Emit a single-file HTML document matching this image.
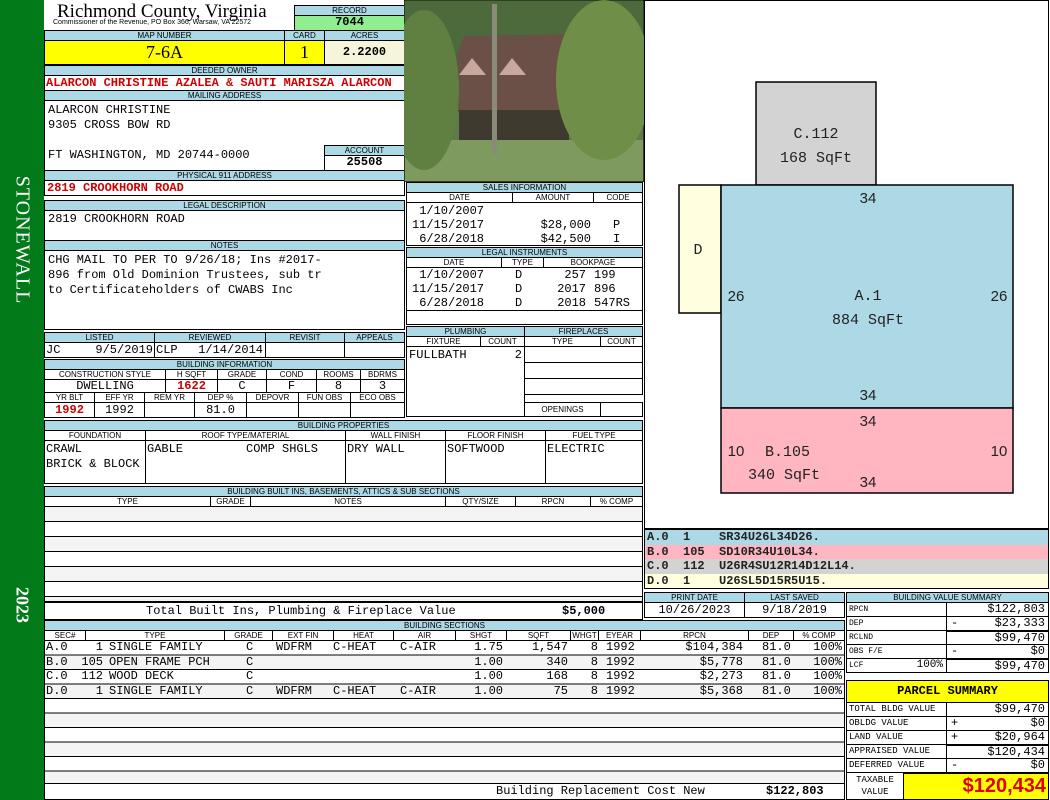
<!DOCTYPE html>
<html><head><meta charset="utf-8"><style>
*{margin:0;padding:0;box-sizing:border-box}
body{width:1050px;height:800px;position:relative;background:#fff;overflow:hidden;font-family:"Liberation Sans",sans-serif}
.a{position:absolute;border:1px solid #000;background:#fff;overflow:hidden;white-space:nowrap}
.h{background:#add8e6;font-size:8px;text-align:center;line-height:9px;font-family:"Liberation Sans",sans-serif}
.m{font-family:"Liberation Mono",monospace;font-size:12px;line-height:13px}
.r{color:#d00000;font-weight:bold}
.c{text-align:center}.rt{text-align:right;padding-right:3px}
.t{position:absolute;white-space:nowrap}
.row{position:absolute;left:0;height:15px;width:100%;font-family:"Liberation Mono",monospace;font-size:12px;line-height:14px}
.row span{position:absolute;white-space:nowrap}
</style></head><body>
<div style="position:absolute;left:0;top:0;width:44px;height:800px;background:#037a1a"></div>
<div class="t" style="left:22px;top:240px;transform:translate(-50%,-50%) rotate(90deg);color:#fff;font:20px 'Liberation Serif',serif;letter-spacing:1px">STONEWALL</div>
<div class="t" style="left:22px;top:605px;transform:translate(-50%,-50%) rotate(90deg);color:#fff;font:bold 18px 'Liberation Serif',serif">2023</div>

<div class="t" style="left:57px;top:1px;font:19px 'Liberation Serif',serif">Richmond County, Virginia</div>
<div class="t" style="left:53px;top:19px;font:7px 'Liberation Sans',sans-serif">Commissioner of the Revenue, PO Box 366, Warsaw, VA 22572</div>
<div class="a h" style="left:294px;top:5px;width:111px;height:11px">RECORD</div>
<div class="a m c" style="left:294px;top:15px;width:111px;height:16px;background:#90ee90;font-weight:bold">7044</div>
<div class="a h" style="left:44px;top:30px;width:241px;height:11px">MAP NUMBER</div>
<div class="a h" style="left:284px;top:30px;width:41px;height:11px">CARD</div>
<div class="a h" style="left:324px;top:30px;width:81px;height:11px">ACRES</div>
<div class="a c" style="left:44px;top:40px;width:241px;height:25px;background:#ffff00;font:18px 'Liberation Serif',serif;line-height:23px">7-6A</div>
<div class="a c" style="left:284px;top:40px;width:41px;height:25px;background:#ffff00;font:18px 'Liberation Serif',serif;line-height:23px">1</div>
<div class="a m c" style="left:324px;top:40px;width:81px;height:25px;background:#f5f5dc;font-weight:bold;line-height:23px">2.2200</div>
<div class="a h" style="left:44px;top:65px;width:361px;height:11px">DEEDED OWNER</div>
<div class="a m r" style="left:44px;top:75px;width:361px;height:16px;padding-left:1px;font-size:12px;line-height:15px">ALARCON CHRISTINE AZALEA &amp; SAUTI MARISZA ALARCON</div>
<div class="a h" style="left:44px;top:90px;width:361px;height:11px">MAILING ADDRESS</div>
<div class="a m" style="left:44px;top:100px;width:361px;height:71px;padding:2px 3px;line-height:15px">ALARCON CHRISTINE<br>9305 CROSS BOW RD<br><br>FT WASHINGTON, MD 20744-0000</div>
<div class="a h" style="left:324px;top:145px;width:81px;height:11px">ACCOUNT</div>
<div class="a m c" style="left:324px;top:155px;width:81px;height:16px;font-weight:bold">25508</div>
<div class="a h" style="left:44px;top:170px;width:361px;height:11px">PHYSICAL 911 ADDRESS</div>
<div class="a m r" style="left:44px;top:180px;width:361px;height:16px;padding-left:2px;line-height:15px">2819 CROOKHORN ROAD</div>
<div class="a h" style="left:44px;top:200px;width:361px;height:11px">LEGAL DESCRIPTION</div>
<div class="a m" style="left:44px;top:210px;width:361px;height:31px;padding:2px 3px">2819 CROOKHORN ROAD</div>
<div class="a h" style="left:44px;top:240px;width:361px;height:11px">NOTES</div>
<div class="a m" style="left:44px;top:250px;width:361px;height:80px;padding:2px 3px;line-height:15px">CHG MAIL TO PER TO 9/26/18; Ins #2017-<br>896 from Old Dominion Trustees, sub tr<br>to Certificateholders of CWABS Inc</div>

<div class="a h" style="left:44px;top:332px;width:111px;height:11px">LISTED</div>
<div class="a h" style="left:154px;top:332px;width:112px;height:11px">REVIEWED</div>
<div class="a h" style="left:265px;top:332px;width:80px;height:11px">REVISIT</div>
<div class="a h" style="left:344px;top:332px;width:61px;height:11px">APPEALS</div>
<div class="a m" style="left:44px;top:342px;width:111px;height:16px;padding:1px 1px">JC<span style="float:right">9/5/2019</span></div>
<div class="a m" style="left:154px;top:342px;width:112px;height:16px;padding:1px 1px">CLP<span style="float:right;padding-right:1px">1/14/2014</span></div>
<div class="a" style="left:265px;top:342px;width:80px;height:16px"></div>
<div class="a" style="left:344px;top:342px;width:61px;height:16px"></div>

<div class="a h" style="left:44px;top:359px;width:361px;height:11px">BUILDING INFORMATION</div>
<div class="a h" style="left:44px;top:369px;width:122px;height:11px;background:#fff">CONSTRUCTION STYLE</div>
<div class="a h" style="left:165px;top:369px;width:53px;height:11px;background:#fff">H SQFT</div>
<div class="a h" style="left:217px;top:369px;width:50px;height:11px;background:#fff">GRADE</div>
<div class="a h" style="left:266px;top:369px;width:51px;height:11px;background:#fff">COND</div>
<div class="a h" style="left:316px;top:369px;width:45px;height:11px;background:#fff">ROOMS</div>
<div class="a h" style="left:360px;top:369px;width:45px;height:11px;background:#fff">BDRMS</div>
<div class="a m c" style="left:44px;top:379px;width:122px;height:14px">DWELLING</div>
<div class="a m c r" style="left:165px;top:379px;width:53px;height:14px">1622</div>
<div class="a m c" style="left:217px;top:379px;width:50px;height:14px">C</div>
<div class="a m c" style="left:266px;top:379px;width:51px;height:14px">F</div>
<div class="a m c" style="left:316px;top:379px;width:45px;height:14px">8</div>
<div class="a m c" style="left:360px;top:379px;width:45px;height:14px">3</div>
<div class="a h" style="left:44px;top:392px;width:51px;height:11px;background:#fff">YR BLT</div>
<div class="a h" style="left:94px;top:392px;width:51px;height:11px;background:#fff">EFF YR</div>
<div class="a h" style="left:144px;top:392px;width:51px;height:11px;background:#fff">REM YR</div>
<div class="a h" style="left:194px;top:392px;width:53px;height:11px;background:#fff">DEP %</div>
<div class="a h" style="left:246px;top:392px;width:53px;height:11px;background:#fff">DEPOVR</div>
<div class="a h" style="left:298px;top:392px;width:53px;height:11px;background:#fff">FUN OBS</div>
<div class="a h" style="left:350px;top:392px;width:55px;height:11px;background:#fff">ECO OBS</div>
<div class="a m c r" style="left:44px;top:402px;width:51px;height:16px;line-height:15px">1992</div>
<div class="a m c" style="left:94px;top:402px;width:51px;height:16px;line-height:15px">1992</div>
<div class="a" style="left:144px;top:402px;width:51px;height:16px"></div>
<div class="a m c" style="left:194px;top:402px;width:53px;height:16px;line-height:15px">81.0</div>
<div class="a" style="left:246px;top:402px;width:53px;height:16px"></div>
<div class="a" style="left:298px;top:402px;width:53px;height:16px"></div>
<div class="a" style="left:350px;top:402px;width:55px;height:16px"></div>

<svg style="position:absolute;left:404px;top:0" width="240" height="182">
<rect x="0" y="0" width="240" height="182" fill="#5e7a4a" stroke="#000"/>
<rect x="1" y="1" width="238" height="60" fill="#4d6a3c"/>
<rect x="1" y="140" width="238" height="41" fill="#7f9a5e"/>
<polygon points="45,78 60,36 170,34 175,110 40,112" fill="#6b5048"/>
<rect x="55" y="110" width="110" height="30" fill="#3e3a30"/>
<rect x="88" y="4" width="5" height="150" fill="#8a8a78"/>
<ellipse cx="200" cy="80" rx="48" ry="80" fill="#6f8f48"/>
<ellipse cx="20" cy="90" rx="35" ry="80" fill="#5f8040"/>
<polygon points="55,75 68,58 82,75" fill="#c9a8a0"/><polygon points="95,75 108,58 122,75" fill="#c9a8a0"/>
</svg>

<div class="a h" style="left:406px;top:182px;width:237px;height:11px">SALES INFORMATION</div>
<div class="a h" style="left:406px;top:192px;width:107px;height:11px;background:#fff">DATE</div>
<div class="a h" style="left:512px;top:192px;width:82px;height:11px;background:#fff">AMOUNT</div>
<div class="a h" style="left:593px;top:192px;width:50px;height:11px;background:#fff">CODE</div>
<div class="a" style="left:406px;top:202px;width:237px;height:44px">
<div class="row" style="top:1px"><span style="right:158px">1/10/2007</span></div>
<div class="row" style="top:15px"><span style="right:158px">11/15/2017</span><span style="right:51px">$28,000</span><span style="left:206px">P</span></div>
<div class="row" style="top:29px"><span style="right:158px">6/28/2018</span><span style="right:51px">$42,500</span><span style="left:206px">I</span></div>
</div>
<div class="a h" style="left:406px;top:247px;width:237px;height:11px">LEGAL INSTRUMENTS</div>
<div class="a h" style="left:406px;top:257px;width:96px;height:11px;background:#fff">DATE</div>
<div class="a h" style="left:501px;top:257px;width:43px;height:11px;background:#fff">TYPE</div>
<div class="a h" style="left:543px;top:257px;width:100px;height:11px;background:#fff">BOOKPAGE</div>
<div class="a" style="left:406px;top:267px;width:237px;height:58px">
<div class="row" style="top:0"><span style="right:158px">1/10/2007</span><span style="left:108px">D</span><span style="right:56px">257</span><span style="left:187px">199</span></div>
<div class="row" style="top:14px"><span style="right:158px">11/15/2017</span><span style="left:108px">D</span><span style="right:56px">2017</span><span style="left:187px">896</span></div>
<div class="row" style="top:28px"><span style="right:158px">6/28/2018</span><span style="left:108px">D</span><span style="right:56px">2018</span><span style="left:187px">547RS</span></div>
<div style="position:absolute;left:0;top:42px;width:100%;border-top:1px solid #000"></div>
</div>

<div class="a h" style="left:406px;top:326px;width:119px;height:11px">PLUMBING</div>
<div class="a h" style="left:524px;top:326px;width:119px;height:11px">FIREPLACES</div>
<div class="a h" style="left:406px;top:336px;width:75px;height:11px;background:#fff">FIXTURE</div>
<div class="a h" style="left:480px;top:336px;width:45px;height:11px;background:#fff">COUNT</div>
<div class="a h" style="left:524px;top:336px;width:77px;height:11px;background:#fff">TYPE</div>
<div class="a h" style="left:600px;top:336px;width:43px;height:11px;background:#fff">COUNT</div>
<div class="a m" style="left:406px;top:346px;width:119px;height:71px;padding:2px 2px">FULLBATH<span style="float:right">2</span></div>
<div class="a" style="left:524px;top:346px;width:119px;height:17px"></div>
<div class="a" style="left:524px;top:362px;width:119px;height:17px"></div>
<div class="a" style="left:524px;top:378px;width:119px;height:17px"></div>
<div class="a h" style="left:524px;top:402px;width:77px;height:15px;background:#fff;line-height:13px">OPENINGS</div>
<div class="a" style="left:600px;top:402px;width:43px;height:15px"></div>

<div class="a h" style="left:44px;top:420px;width:599px;height:11px">BUILDING PROPERTIES</div>
<div class="a h" style="left:44px;top:430px;width:102px;height:11px;background:#fff">FOUNDATION</div>
<div class="a h" style="left:145px;top:430px;width:201px;height:11px;background:#fff">ROOF TYPE/MATERIAL</div>
<div class="a h" style="left:345px;top:430px;width:101px;height:11px;background:#fff">WALL FINISH</div>
<div class="a h" style="left:445px;top:430px;width:101px;height:11px;background:#fff">FLOOR FINISH</div>
<div class="a h" style="left:545px;top:430px;width:98px;height:11px;background:#fff">FUEL TYPE</div>
<div class="a m" style="left:44px;top:440px;width:102px;height:44px;padding:1px 1px;line-height:15px">CRAWL<br>BRICK &amp; BLOCK</div>
<div class="a m" style="left:145px;top:440px;width:201px;height:44px;padding:1px 1px;line-height:15px">GABLE<span style="position:absolute;left:100px">COMP SHGLS</span></div>
<div class="a m" style="left:345px;top:440px;width:101px;height:44px;padding:1px 1px;line-height:15px">DRY WALL</div>
<div class="a m" style="left:445px;top:440px;width:101px;height:44px;padding:1px 1px;line-height:15px">SOFTWOOD</div>
<div class="a m" style="left:545px;top:440px;width:98px;height:44px;padding:1px 1px;line-height:15px">ELECTRIC</div>

<div class="a h" style="left:44px;top:486px;width:599px;height:11px">BUILDING BUILT INS, BASEMENTS, ATTICS &amp; SUB SECTIONS</div>
<div class="a h" style="left:44px;top:496px;width:167px;height:11px;background:#fff">TYPE</div>
<div class="a h" style="left:210px;top:496px;width:41px;height:11px;background:#fff">GRADE</div>
<div class="a h" style="left:250px;top:496px;width:196px;height:11px;background:#fff">NOTES</div>
<div class="a h" style="left:445px;top:496px;width:71px;height:11px;background:#fff">QTY/SIZE</div>
<div class="a h" style="left:515px;top:496px;width:76px;height:11px;background:#fff">RPCN</div>
<div class="a h" style="left:590px;top:496px;width:53px;height:11px;background:#fff">% COMP</div>
<div class="a" style="left:44px;top:506px;width:599px;height:96px;background:repeating-linear-gradient(#f4f4f4 0 14px,#000 14px 15px,#fff 15px 29px,#000 29px 30px)"></div>
<div class="a m" style="left:44px;top:602px;width:599px;height:18px;line-height:16px"><span class="t" style="left:101px">Total Built Ins, Plumbing &amp; Fireplace Value</span><span class="t" style="left:517px;font-weight:bold">$5,000</span></div>

<div class="a h" style="left:44px;top:620px;width:801px;height:11px">BUILDING SECTIONS</div>
<div style="position:absolute;left:44px;top:630px;width:801px;height:11px">
<div class="a h" style="left:0;top:0;width:42px;height:11px;background:#fff">SEC#</div>
<div class="a h" style="left:41px;top:0;width:140px;height:11px;background:#fff">TYPE</div>
<div class="a h" style="left:180px;top:0;width:49px;height:11px;background:#fff">GRADE</div>
<div class="a h" style="left:228px;top:0;width:62px;height:11px;background:#fff">EXT FIN</div>
<div class="a h" style="left:289px;top:0;width:61px;height:11px;background:#fff">HEAT</div>
<div class="a h" style="left:349px;top:0;width:63px;height:11px;background:#fff">AIR</div>
<div class="a h" style="left:411px;top:0;width:52px;height:11px;background:#fff">SHGT</div>
<div class="a h" style="left:462px;top:0;width:65px;height:11px;background:#fff">SQFT</div>
<div class="a h" style="left:526px;top:0;width:29px;height:11px;background:#fff">WHGT</div>
<div class="a h" style="left:554px;top:0;width:43px;height:11px;background:#fff">EYEAR</div>
<div class="a h" style="left:596px;top:0;width:109px;height:11px;background:#fff">RPCN</div>
<div class="a h" style="left:704px;top:0;width:46px;height:11px;background:#fff">DEP</div>
<div class="a h" style="left:749px;top:0;width:52px;height:11px;background:#fff">% COMP</div>
</div>
<div class="a" style="left:44px;top:640px;width:801px;height:144px;background:repeating-linear-gradient(#fff 0 13.5px,#000 13.5px 14.5px,#f4f4f4 14.5px 28px,#000 28px 29px)"></div>
<div style="position:absolute;left:0;top:640px;width:1050px;height:60px">
<div class="row" style="top:0"><span style="left:46px">A.0</span><span style="right:947px">1</span><span style="left:109px">SINGLE FAMILY</span><span style="left:246px">C</span><span style="left:276px">WDFRM</span><span style="left:333px">C-HEAT</span><span style="left:400px">C-AIR</span><span style="right:547px">1.75</span><span style="right:482px">1,547</span><span style="right:452px">8</span><span style="left:606px">1992</span><span style="right:307px">$104,384</span><span style="left:762px">81.0</span><span style="right:208px">100%</span></div>
<div class="row" style="top:14.5px"><span style="left:46px">B.0</span><span style="right:947px">105</span><span style="left:109px">OPEN FRAME PCH</span><span style="left:246px">C</span><span style="right:547px">1.00</span><span style="right:482px">340</span><span style="right:452px">8</span><span style="left:606px">1992</span><span style="right:307px">$5,778</span><span style="left:762px">81.0</span><span style="right:208px">100%</span></div>
<div class="row" style="top:29px"><span style="left:46px">C.0</span><span style="right:947px">112</span><span style="left:109px">WOOD DECK</span><span style="left:246px">C</span><span style="right:547px">1.00</span><span style="right:482px">168</span><span style="right:452px">8</span><span style="left:606px">1992</span><span style="right:307px">$2,273</span><span style="left:762px">81.0</span><span style="right:208px">100%</span></div>
<div class="row" style="top:43.5px"><span style="left:46px">D.0</span><span style="right:947px">1</span><span style="left:109px">SINGLE FAMILY</span><span style="left:246px">C</span><span style="left:276px">WDFRM</span><span style="left:333px">C-HEAT</span><span style="left:400px">C-AIR</span><span style="right:547px">1.00</span><span style="right:482px">75</span><span style="right:452px">8</span><span style="left:606px">1992</span><span style="right:307px">$5,368</span><span style="left:762px">81.0</span><span style="right:208px">100%</span></div>
</div>
<div class="a m" style="left:44px;top:783px;width:801px;height:17px;line-height:15px"><span class="t" style="left:451px">Building Replacement Cost New</span><span class="t" style="left:721px;font-weight:bold">$122,803</span></div>

<div class="a" style="left:644px;top:0;width:405px;height:529px"></div>
<svg style="position:absolute;left:644px;top:0" width="405" height="529" font-family="Liberation Mono,monospace">
<rect x="112" y="82" width="120" height="103" fill="#d3d3d3" stroke="#000" stroke-width="1.5"/>
<rect x="35" y="185" width="42" height="128" fill="#ffffe0" stroke="#000" stroke-width="1.5"/>
<rect x="77" y="185" width="292" height="223" fill="#add8e6" stroke="#000" stroke-width="1.5"/>
<rect x="77" y="408" width="292" height="85" fill="#ffb6c1" stroke="#000" stroke-width="1.5"/>
<g font-size="15" text-anchor="middle" fill="#222">
<text x="172" y="138">C.112</text><text x="172" y="162">168 SqFt</text>
<text x="54" y="254">D</text>
<text x="224" y="300">A.1</text><text x="224" y="324">884 SqFt</text>
</g>
<g font-size="15" text-anchor="middle" fill="#222" font-family="Liberation Sans,sans-serif">
<text x="224" y="203">34</text><text x="224" y="400">34</text><text x="224" y="426">34</text><text x="224" y="487">34</text>
<text x="92" y="301">26</text><text x="355" y="301">26</text>
<text x="92" y="456">10</text><text x="355" y="456">10</text>
</g>
<g font-size="15" fill="#222"><text x="121" y="456">B.105</text><text x="104" y="479">340 SqFt</text></g>
</svg>

<div class="a m" style="left:644px;top:529px;width:405px;height:60px;font-weight:bold;font-size:12px;line-height:14.5px;color:#222">
<div style="background:#add8e6;height:14.5px;padding-left:2px">A.0&nbsp;&nbsp;1&nbsp;&nbsp;&nbsp;&nbsp;SR34U26L34D26.</div>
<div style="background:#ffb6c1;height:14.5px;padding-left:2px">B.0&nbsp;&nbsp;105&nbsp;&nbsp;SD10R34U10L34.</div>
<div style="background:#d3d3d3;height:14.5px;padding-left:2px">C.0&nbsp;&nbsp;112&nbsp;&nbsp;U26R4SU12R14D12L14.</div>
<div style="background:#ffffe0;height:14.5px;padding-left:2px">D.0&nbsp;&nbsp;1&nbsp;&nbsp;&nbsp;&nbsp;U26SL5D15R5U15.</div>
</div>

<div class="a h" style="left:644px;top:592px;width:101px;height:11px">PRINT DATE</div>
<div class="a h" style="left:744px;top:592px;width:101px;height:11px">LAST SAVED</div>
<div class="a m c" style="left:644px;top:602px;width:101px;height:16px;line-height:15px">10/26/2023</div>
<div class="a m c" style="left:744px;top:602px;width:101px;height:16px;line-height:15px">9/18/2019</div>

<div class="a h" style="left:846px;top:592px;width:203px;height:11px">BUILDING VALUE SUMMARY</div>
<div style="position:absolute;left:846px;top:602px;width:203px;font-family:'Liberation Mono',monospace;font-size:10px">
<div class="a" style="left:0;top:0;width:101px;height:15px;padding-left:2px;font-size:8px;line-height:13px">RPCN</div><div class="a rt m" style="left:100px;top:0;width:103px;height:15px">$122,803</div>
<div class="a" style="left:0;top:14px;width:101px;height:15px;padding-left:2px;font-size:8px;line-height:13px">DEP</div><div class="a m" style="left:100px;top:14px;width:103px;height:15px;padding-left:4px">-<span style="float:right;padding-right:3px">$23,333</span></div>
<div class="a" style="left:0;top:28px;width:101px;height:15px;padding-left:2px;font-size:8px;line-height:13px">RCLND</div><div class="a rt m" style="left:100px;top:28px;width:103px;height:15px;border-top:2px solid #000">$99,470</div>
<div class="a" style="left:0;top:42px;width:101px;height:15px;padding-left:2px;font-size:8px;line-height:13px">OBS F/E</div><div class="a m" style="left:100px;top:42px;width:103px;height:15px;padding-left:4px">-<span style="float:right;padding-right:3px">$0</span></div>
<div class="a" style="left:0;top:56px;width:101px;height:15px;padding-left:2px;font-size:8px;line-height:13px">LCF<span class="m" style="float:right;padding-right:3px;font-size:11px">100%</span></div><div class="a rt m" style="left:100px;top:56px;width:103px;height:15px;border-top:2px solid #000">$99,470</div>
</div>

<div class="a" style="left:846px;top:680px;width:203px;height:23px;background:#ffff00;text-align:center;font:bold 12px 'Liberation Mono',monospace;line-height:21px">PARCEL SUMMARY</div>
<div style="position:absolute;left:846px;top:702px;width:203px;font-family:'Liberation Mono',monospace;font-size:9px">
<div class="a" style="left:0;top:0;width:101px;height:15px;padding-left:2px;line-height:13px">TOTAL BLDG VALUE</div><div class="a rt m" style="left:100px;top:0;width:103px;height:15px">$99,470</div>
<div class="a" style="left:0;top:14px;width:101px;height:15px;padding-left:2px;line-height:13px">OBLDG VALUE</div><div class="a m" style="left:100px;top:14px;width:103px;height:15px;padding-left:4px">+<span style="float:right;padding-right:3px">$0</span></div>
<div class="a" style="left:0;top:28px;width:101px;height:15px;padding-left:2px;line-height:13px">LAND VALUE</div><div class="a m" style="left:100px;top:28px;width:103px;height:15px;padding-left:4px">+<span style="float:right;padding-right:3px">$20,964</span></div>
<div class="a" style="left:0;top:42px;width:101px;height:15px;padding-left:2px;line-height:13px">APPRAISED VALUE</div><div class="a rt m" style="left:100px;top:42px;width:103px;height:15px;border-top:2px solid #000">$120,434</div>
<div class="a" style="left:0;top:56px;width:101px;height:15px;padding-left:2px;line-height:13px">DEFERRED VALUE</div><div class="a m" style="left:100px;top:56px;width:103px;height:15px;padding-left:4px">-<span style="float:right;padding-right:3px">$0</span></div>
<div class="a c" style="left:0;top:70px;width:58px;height:28px;line-height:12px;padding-top:1px">TAXABLE<br>VALUE</div>
<div class="a" style="left:57px;top:70px;width:146px;height:28px;background:#ffff00;border-top:2px solid #000;color:#e00000;font:bold 20px 'Liberation Sans',sans-serif;text-align:right;padding-right:2px;line-height:25px">$120,434</div>
</div>
</body></html>
